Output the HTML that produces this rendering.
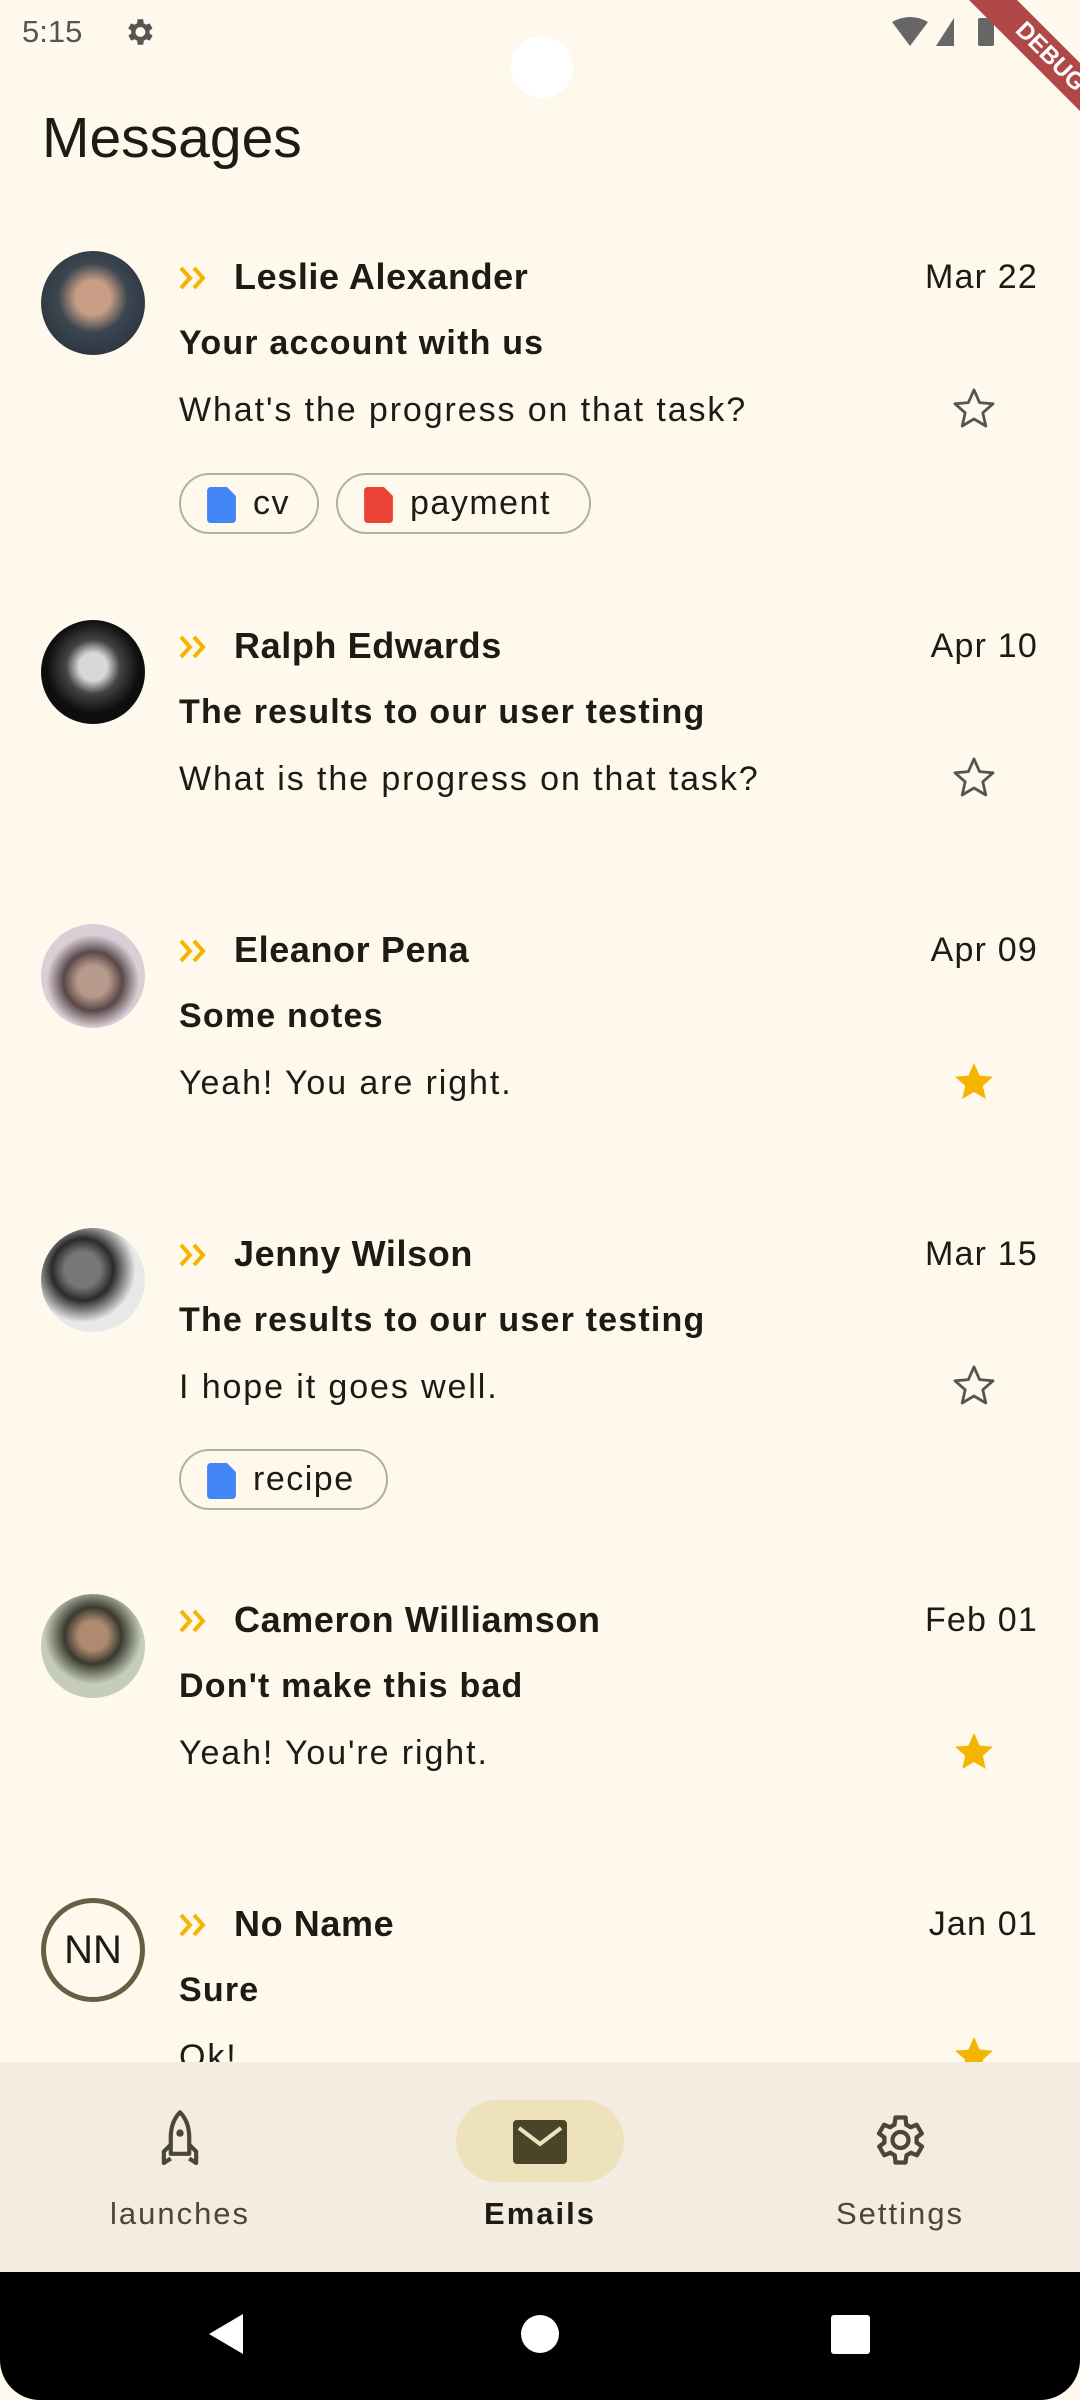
<!DOCTYPE html>
<html><head><meta charset="utf-8"><style>
*{margin:0;padding:0;box-sizing:border-box}
body{width:1080px;height:2400px;background:#fef8ed;font-family:"Liberation Sans",sans-serif;color:#1e1b13;position:relative;overflow:hidden}
.a{position:absolute;white-space:nowrap}
.name{font-size:36px;font-weight:bold;line-height:40px;letter-spacing:0.6px}
.subj{font-size:34px;font-weight:bold;line-height:40px;letter-spacing:1.2px}
.body{font-size:34px;line-height:40px;color:#1e1b13;letter-spacing:1.9px}
.date{font-size:34px;line-height:40px;right:42px;letter-spacing:1.2px}
.av{position:absolute;left:41px;width:104px;height:104px;border-radius:50%}
.chip{position:absolute;height:61px;border:2px solid #b3aea6;border-radius:31px;font-size:34px;line-height:57px;padding-left:72px;letter-spacing:1.5px}
.doc{position:absolute;left:24px;top:12px;width:33px;height:36px}
.nav{position:absolute;left:0;top:2062px;width:1080px;height:210px;background:#f4ece0}
.lbl{position:absolute;top:2195px;font-size:31px;line-height:38px;text-align:center;width:300px;color:#4a4639;letter-spacing:2px}
</style></head><body>
<div class="a" style="left:22px;top:14px;font-size:31px;color:#555;line-height:36px">5:15</div>
<svg class="a" style="left:122px;top:15px" width="34" height="34" viewBox="0 0 24 24"><path fill="#555" d="M19.4 13a7.5 7.5 0 0 0 0-2l2.1-1.6-2-3.5-2.5 1a7.6 7.6 0 0 0-1.7-1L15 3h-4l-.4 2.9a7.6 7.6 0 0 0-1.7 1l-2.5-1-2 3.5L6.6 11a7.5 7.5 0 0 0 0 2l-2.1 1.6 2 3.5 2.5-1c.5.4 1.1.7 1.7 1L11 21h4l.4-2.9c.6-.3 1.2-.6 1.7-1l2.5 1 2-3.5zM13 15.5a3.5 3.5 0 1 1 0-7 3.5 3.5 0 0 1 0 7z"/></svg>
<div class="a" style="left:511px;top:36px;width:62px;height:62px;border-radius:50%;background:#fff"></div>
<svg class="a" style="left:890px;top:14px" width="120" height="36" viewBox="0 0 120 36"><path d="M2 8 Q20 -2 38 8 L20 32Z" fill="#666"/><path d="M64 4 L64 32 L46 32Z" fill="#666"/><rect x="88" y="4" width="16" height="28" rx="2" fill="#666"/></svg>
<div class="a" style="left:940px;top:40px;width:220px;height:34px;background:#b04848;transform:rotate(45deg);color:#fff;font-weight:bold;font-size:24px;text-align:center;line-height:34px">DEBUG</div>

<div class="a" style="left:42px;top:104px;font-size:57px;line-height:68px">Messages</div>

<!-- item 1 -->
<div class="av" style="top:251px;background:radial-gradient(circle at 50% 45%,#c89f86 0 22%,#3b4650 45%,#1f2a33 100%)"></div>
<svg class="a" style="left:178px;top:266px" width="32" height="24" viewBox="0 0 32 24"><path d="M3 2l9 10-9 10M16 2l9 10-9 10" fill="none" stroke="#f5b400" stroke-width="4"/></svg>
<div class="a name" style="left:234px;top:257px">Leslie Alexander</div>
<div class="a date" style="top:257px">Mar 22</div>
<div class="a subj" style="left:179px;top:323px">Your account with us</div>
<div class="a body" style="left:179px;top:390px">What's the progress on that task?</div>
<svg class="a" style="left:950px;top:385px" width="48" height="48" viewBox="0 0 24 24"><path d="M12 2.5l2.8 6.3 6.7.6-5.1 4.5 1.5 6.6L12 17l-5.9 3.5 1.5-6.6-5.1-4.5 6.7-.6z" fill="none" stroke="#555" stroke-width="1.4" stroke-linejoin="round"/></svg>
<div class="chip" style="left:179px;top:473px;width:140px">cv<svg class="doc" viewBox="0 0 16 20"><path d="M2 0h9l5 5v13a2 2 0 0 1-2 2H2a2 2 0 0 1-2-2V2a2 2 0 0 1 2-2z" fill="#4285f4"/></svg></div>
<div class="chip" style="left:336px;top:473px;width:255px">payment<svg class="doc" viewBox="0 0 16 20"><path d="M2 0h9l5 5v13a2 2 0 0 1-2 2H2a2 2 0 0 1-2-2V2a2 2 0 0 1 2-2z" fill="#ea4335"/></svg></div>

<!-- item 2 -->
<div class="av" style="top:620px;background:radial-gradient(circle at 50% 45%,#d8d8d8 0 18%,#444 35%,#0e0e0e 60%)"></div>
<svg class="a" style="left:178px;top:635px" width="32" height="24" viewBox="0 0 32 24"><path d="M3 2l9 10-9 10M16 2l9 10-9 10" fill="none" stroke="#f5b400" stroke-width="4"/></svg>
<div class="a name" style="left:234px;top:626px">Ralph Edwards</div>
<div class="a date" style="top:626px">Apr 10</div>
<div class="a subj" style="left:179px;top:692px">The results to our user testing</div>
<div class="a body" style="left:179px;top:759px">What is the progress on that task?</div>
<svg class="a" style="left:950px;top:754px" width="48" height="48" viewBox="0 0 24 24"><path d="M12 2.5l2.8 6.3 6.7.6-5.1 4.5 1.5 6.6L12 17l-5.9 3.5 1.5-6.6-5.1-4.5 6.7-.6z" fill="none" stroke="#555" stroke-width="1.4" stroke-linejoin="round"/></svg>

<!-- item 3 -->
<div class="av" style="top:924px;background:radial-gradient(circle at 50% 55%,#b89a8c 0 20%,#5a4848 38%,#d9cfd6 60%)"></div>
<svg class="a" style="left:178px;top:939px" width="32" height="24" viewBox="0 0 32 24"><path d="M3 2l9 10-9 10M16 2l9 10-9 10" fill="none" stroke="#f5b400" stroke-width="4"/></svg>
<div class="a name" style="left:234px;top:930px">Eleanor Pena</div>
<div class="a date" style="top:930px">Apr 09</div>
<div class="a subj" style="left:179px;top:996px">Some notes</div>
<div class="a body" style="left:179px;top:1063px">Yeah! You are right.</div>
<svg class="a" style="left:950px;top:1058px" width="48" height="48" viewBox="0 0 24 24"><path d="M12 2.5l2.8 6.3 6.7.6-5.1 4.5 1.5 6.6L12 17l-5.9 3.5 1.5-6.6-5.1-4.5 6.7-.6z" fill="#f5b400"/></svg>

<!-- item 4 -->
<div class="av" style="top:1228px;background:radial-gradient(circle at 40% 40%,#777 0 20%,#2a2a2a 35%,#e8e8e8 60%)"></div>
<svg class="a" style="left:178px;top:1243px" width="32" height="24" viewBox="0 0 32 24"><path d="M3 2l9 10-9 10M16 2l9 10-9 10" fill="none" stroke="#f5b400" stroke-width="4"/></svg>
<div class="a name" style="left:234px;top:1234px">Jenny Wilson</div>
<div class="a date" style="top:1234px">Mar 15</div>
<div class="a subj" style="left:179px;top:1300px">The results to our user testing</div>
<div class="a body" style="left:179px;top:1367px">I hope it goes well.</div>
<svg class="a" style="left:950px;top:1362px" width="48" height="48" viewBox="0 0 24 24"><path d="M12 2.5l2.8 6.3 6.7.6-5.1 4.5 1.5 6.6L12 17l-5.9 3.5 1.5-6.6-5.1-4.5 6.7-.6z" fill="none" stroke="#555" stroke-width="1.4" stroke-linejoin="round"/></svg>
<div class="chip" style="left:179px;top:1449px;width:209px">recipe<svg class="doc" viewBox="0 0 16 20"><path d="M2 0h9l5 5v13a2 2 0 0 1-2 2H2a2 2 0 0 1-2-2V2a2 2 0 0 1 2-2z" fill="#4285f4"/></svg></div>

<!-- item 5 -->
<div class="av" style="top:1594px;background:radial-gradient(circle at 50% 40%,#b08a70 0 18%,#3a3a30 35%,#c5cdb8 60%)"></div>
<svg class="a" style="left:178px;top:1609px" width="32" height="24" viewBox="0 0 32 24"><path d="M3 2l9 10-9 10M16 2l9 10-9 10" fill="none" stroke="#f5b400" stroke-width="4"/></svg>
<div class="a name" style="left:234px;top:1600px">Cameron Williamson</div>
<div class="a date" style="top:1600px">Feb 01</div>
<div class="a subj" style="left:179px;top:1666px">Don't make this bad</div>
<div class="a body" style="left:179px;top:1733px">Yeah! You're right.</div>
<svg class="a" style="left:950px;top:1728px" width="48" height="48" viewBox="0 0 24 24"><path d="M12 2.5l2.8 6.3 6.7.6-5.1 4.5 1.5 6.6L12 17l-5.9 3.5 1.5-6.6-5.1-4.5 6.7-.6z" fill="#f5b400"/></svg>

<!-- item 6 -->
<div class="av" style="top:1898px;border:5px solid #675f44;font-size:40px;text-align:center;line-height:94px">NN</div>
<svg class="a" style="left:178px;top:1913px" width="32" height="24" viewBox="0 0 32 24"><path d="M3 2l9 10-9 10M16 2l9 10-9 10" fill="none" stroke="#f5b400" stroke-width="4"/></svg>
<div class="a name" style="left:234px;top:1904px">No Name</div>
<div class="a date" style="top:1904px">Jan 01</div>
<div class="a subj" style="left:179px;top:1970px">Sure</div>
<div class="a body" style="left:179px;top:2037px">Ok!</div>
<svg class="a" style="left:950px;top:2032px" width="48" height="48" viewBox="0 0 24 24"><path d="M12 2.5l2.8 6.3 6.7.6-5.1 4.5 1.5 6.6L12 17l-5.9 3.5 1.5-6.6-5.1-4.5 6.7-.6z" fill="#f5b400"/></svg>

<!-- nav -->
<div class="nav"></div>
<svg class="a" style="left:152px;top:2110px" width="56" height="60" viewBox="0 0 24 26"><path d="M12 1c-3 3-4 7-4 11v7h8v-7c0-4-1-8-4-11z M8 15l-3 3v5l3-2 M16 15l3 3v5l-3-2" fill="none" stroke="#4a4639" stroke-width="1.8" stroke-linejoin="round"/><circle cx="12" cy="10" r="1.6" fill="#4a4639"/></svg>
<div class="a" style="left:456px;top:2100px;width:168px;height:82px;border-radius:41px;background:#ede2bc"></div>
<svg class="a" style="left:513px;top:2120px" width="54" height="44" viewBox="0 0 27 22"><rect x="0" y="0" width="27" height="22" rx="2" fill="#4a4429"/><path d="M3 4l10.5 8L24 4" fill="none" stroke="#ede2bc" stroke-width="2"/></svg>
<svg class="a" style="left:868px;top:2110px" width="60" height="60" viewBox="0 0 24 24"><path d="M19.4 13a7.5 7.5 0 0 0 0-2l2.1-1.6-2-3.5-2.5 1a7.6 7.6 0 0 0-1.7-1L15 3h-4l-.4 2.9a7.6 7.6 0 0 0-1.7 1l-2.5-1-2 3.5L6.6 11a7.5 7.5 0 0 0 0 2l-2.1 1.6 2 3.5 2.5-1c.5.4 1.1.7 1.7 1L11 21h4l.4-2.9c.6-.3 1.2-.6 1.7-1l2.5 1 2-3.5z" fill="none" stroke="#4a4639" stroke-width="1.7" stroke-linejoin="round"/><circle cx="13" cy="12" r="3.2" fill="none" stroke="#4a4639" stroke-width="1.7"/></svg>
<div class="lbl" style="left:30px">launches</div>
<div class="lbl" style="left:390px;font-weight:bold;color:#1e1b13">Emails</div>
<div class="lbl" style="left:750px">Settings</div>

<div class="a" style="left:0;top:2272px;width:1080px;height:128px;background:#000;border-radius:0 0 40px 40px"></div>
<svg class="a" style="left:205px;top:2312px" width="40" height="44" viewBox="0 0 40 44"><path d="M38 2v40L4 22z" fill="#fff"/></svg>
<div class="a" style="left:521px;top:2315px;width:38px;height:38px;border-radius:50%;background:#fff"></div>
<div class="a" style="left:831px;top:2315px;width:39px;height:39px;border-radius:3px;background:#fff"></div>
</body></html>
